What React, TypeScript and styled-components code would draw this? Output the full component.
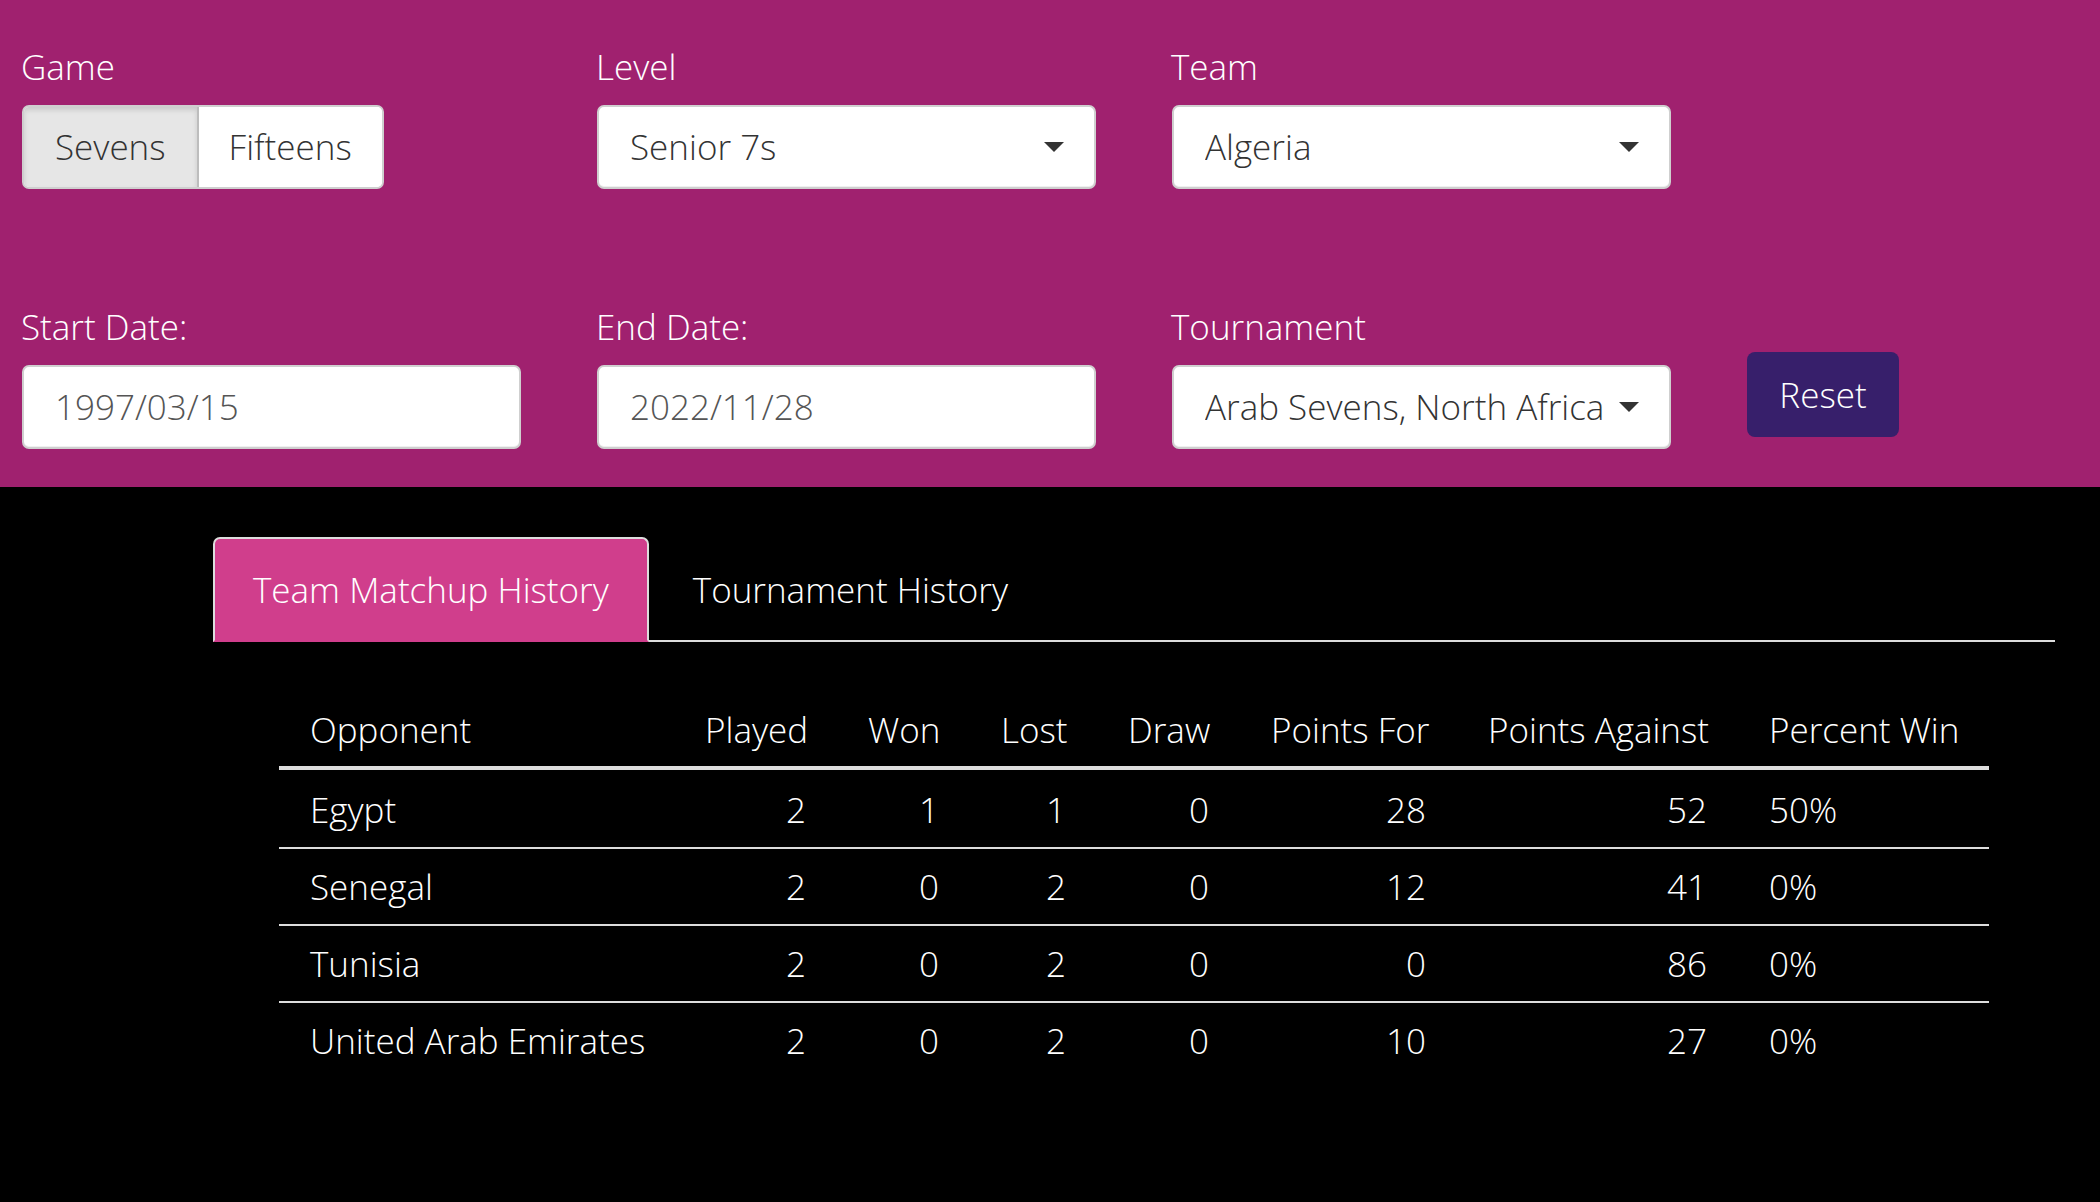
import React from "react";
import styled, { createGlobalStyle } from "styled-components";

const GlobalStyle = createGlobalStyle`
  html, body {
    margin: 0;
    padding: 0;
    background: #000;
  }
  body {
    font-family: "Open Sans", "Liberation Sans", sans-serif;
    font-weight: 300;
    color: #fff;
  }
  * { box-sizing: border-box; }
`;

const Page = styled.div`
  min-height: 1202px;
  background: #000;
  overflow: hidden;
`;

const FilterPanel = styled.section`
  background: #a0216f;
  padding: 42px 0 38px 22px;
  display: grid;
  grid-template-columns: repeat(3, 499px) 152px;
  column-gap: 76px;
  row-gap: 113px;
`;

const Field = styled.div`
  display: flex;
  flex-direction: column;
  align-items: flex-start;
`;

const Label = styled.label`
  font-size: 35px;
  line-height: 50px;
  color: #fff;
  margin: 0 0 13px -1px;
`;

const Toggle = styled.div`
  display: flex;
  height: 84px;
  border: 2px solid #cfcfcf;
  border-radius: 7px;
  overflow: hidden;
  background: #fff;
`;

const ToggleButton = styled.button<{ $active?: boolean }>`
  font-family: inherit;
  font-weight: 300;
  font-size: 35px;
  line-height: 50px;
  color: #333;
  border: none;
  margin: 0;
  padding: 0 ${(p) => (p.$active ? "31px" : "30px")} 0 ${(p) => (p.$active ? "31px" : "30px")};
  background: ${(p) => (p.$active ? "#e6e6e6" : "#fff")};
  box-shadow: ${(p) => (p.$active ? "inset 0 3px 5px rgba(0,0,0,0.125)" : "none")};
  border-right: ${(p) => (p.$active ? "2px solid #bdbdbd" : "none")};
`;

const Control = styled.div<{ $muted?: boolean }>`
  width: 499px;
  height: 84px;
  display: flex;
  align-items: center;
  background: #fff;
  border: 2px solid #cfcfcf;
  border-radius: 7px;
  box-shadow: inset 0 -1px 0 rgba(0,0,0,0.06);
  padding: 0 30px 0 31px;
  font-size: 35px;
  line-height: 50px;
  color: ${(p) => (p.$muted ? "#555" : "#333")};
  white-space: nowrap;
`;

const ControlText = styled.span`
  flex: 1;
  overflow: hidden;
`;

const Caret = styled.span`
  width: 0;
  height: 0;
  border-left: 10px solid transparent;
  border-right: 10px solid transparent;
  border-top: 10px solid #333;
  margin-left: 8px;
`;

const ResetButton = styled.button`
  margin-top: 50px;
  width: 152px;
  height: 85px;
  background: #371f6b;
  border: none;
  border-radius: 8px;
  color: #fff;
  font-family: inherit;
  font-weight: 300;
  font-size: 35px;
  line-height: 50px;
  padding: 0;
`;

const Results = styled.section`
  margin: 50px 45px 0 213px;
`;

const TabBar = styled.div`
  display: flex;
  gap: 4px;
  border-bottom: 2px solid #ddd;
`;

const Tab = styled.div<{ $active?: boolean }>`
  font-size: 35px;
  line-height: 50px;
  color: #fff;
  padding: 26px 38px 25px;
  margin-bottom: -2px;
  border: 2px solid ${(p) => (p.$active ? "#ddd" : "transparent")};
  border-bottom-color: transparent;
  border-radius: 7px 7px 0 0;
  background: ${(p) => (p.$active ? "#d03e8c" : "transparent")};
`;

const TableWrap = styled.div`
  padding: 50px 66px 0;
`;

const Table = styled.table`
  width: 100%;
  table-layout: fixed;
  border-collapse: separate;
  border-spacing: 0;
  font-size: 35px;
  line-height: 50px;
  color: #fff;
`;

const Th = styled.th<{ $left?: boolean }>`
  font-weight: 300;
  padding: 12.5px 31px 11.5px;
  text-align: ${(p) => (p.$left ? "left" : "right")};
  border-bottom: 4px solid #ddd;
  white-space: nowrap;
`;

const Row = styled.tr`
  & + & > td {
    border-top: 2px solid #ddd;
  }
`;

const Td = styled.td<{ $left?: boolean }>`
  padding: 15px 31px 12px;
  text-align: ${(p) => (p.$left ? "left" : "right")};
  white-space: nowrap;

  tr + tr > & {
    padding-top: 13px;
  }
`;

const columns = [
  { label: "Opponent", width: 395, left: true },
  { label: "Played", width: 163 },
  { label: "Won", width: 133 },
  { label: "Lost", width: 127 },
  { label: "Draw", width: 143 },
  { label: "Points For", width: 217 },
  { label: "Points Against", width: 281 },
  { label: "Percent Win", width: 251, left: true },
];

const rows = [
  ["Egypt", "2", "1", "1", "0", "28", "52", "50%"],
  ["Senegal", "2", "0", "2", "0", "12", "41", "0%"],
  ["Tunisia", "2", "0", "2", "0", "0", "86", "0%"],
  ["United Arab Emirates", "2", "0", "2", "0", "10", "27", "0%"],
];

export default function App() {
  return (
    <Page>
      <GlobalStyle />
      <FilterPanel>
        <Field>
          <Label>Game</Label>
          <Toggle>
            <ToggleButton $active>Sevens</ToggleButton>
            <ToggleButton>Fifteens</ToggleButton>
          </Toggle>
        </Field>
        <Field>
          <Label>Level</Label>
          <Control>
            <ControlText>Senior 7s</ControlText>
            <Caret />
          </Control>
        </Field>
        <Field>
          <Label>Team</Label>
          <Control>
            <ControlText>Algeria</ControlText>
            <Caret />
          </Control>
        </Field>
        <Field />
        <Field>
          <Label>Start Date:</Label>
          <Control $muted>
            <ControlText>1997/03/15</ControlText>
          </Control>
        </Field>
        <Field>
          <Label>End Date:</Label>
          <Control $muted>
            <ControlText>2022/11/28</ControlText>
          </Control>
        </Field>
        <Field>
          <Label>Tournament</Label>
          <Control>
            <ControlText>Arab Sevens, North Africa</ControlText>
            <Caret />
          </Control>
        </Field>
        <Field>
          <ResetButton>Reset</ResetButton>
        </Field>
      </FilterPanel>
      <Results>
        <TabBar>
          <Tab $active>Team Matchup History</Tab>
          <Tab>Tournament History</Tab>
        </TabBar>
        <TableWrap>
          <Table>
            <colgroup>
              {columns.map((c) => (
                <col key={c.label} style={{ width: c.width }} />
              ))}
            </colgroup>
            <thead>
              <tr>
                {columns.map((c) => (
                  <Th key={c.label} $left={c.left}>
                    {c.label}
                  </Th>
                ))}
              </tr>
            </thead>
            <tbody>
              {rows.map((r) => (
                <Row key={r[0]}>
                  {r.map((v, i) => (
                    <Td key={i} $left={columns[i].left}>
                      {v}
                    </Td>
                  ))}
                </Row>
              ))}
            </tbody>
          </Table>
        </TableWrap>
      </Results>
    </Page>
  );
}
